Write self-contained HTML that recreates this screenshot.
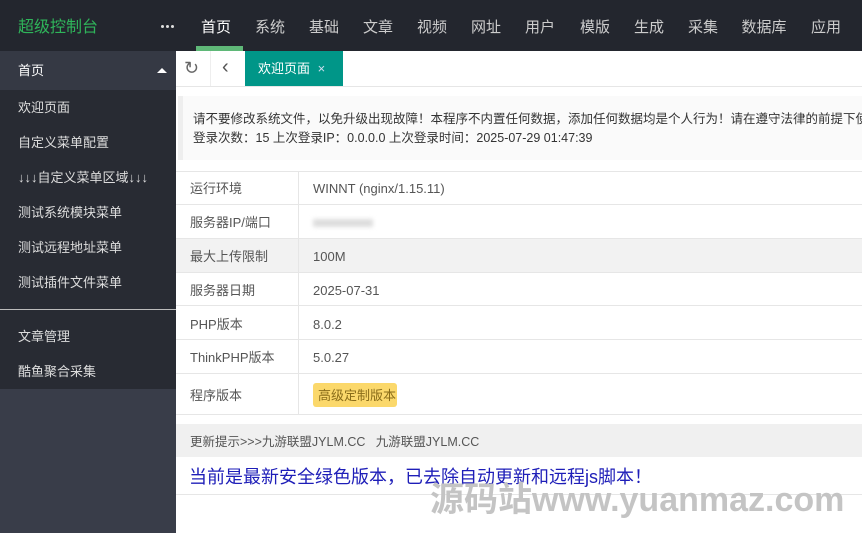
<!DOCTYPE html><html><head><meta charset="utf-8"><style>
*{margin:0;padding:0;box-sizing:border-box}
body{width:862px;height:533px;overflow:hidden;background:#fff;font-family:"Liberation Sans","Noto Sans CJK SC",sans-serif;position:relative;font-size:13px;color:#333;line-height:1.15}
.a{position:absolute;white-space:nowrap}
.hdr{left:0;top:0;width:862px;height:51px;background:#23262e}
.nav{top:19px;color:#ccc;font-size:15px;transform:translateX(-50%)}
.side{left:0;top:51px;width:176px;height:482px;background:#393d49}
.sub{color:#ddd;font-size:13px;left:18px}
.row{left:176px;width:686px;border-bottom:1px solid #e6e6e6}
.c1{left:190px;color:#555}
.c2{left:313px;color:#555}
</style></head><body>
<div class="a hdr"></div>
<div class="a" style="left:18px;top:19px;color:#2fb45a;font-size:16px">超级控制台</div>
<div class="a" style="left:161px;top:25px;width:3px;height:3px;background:#ddd;border-radius:50%"></div>
<div class="a" style="left:166px;top:25px;width:3px;height:3px;background:#ddd;border-radius:50%"></div>
<div class="a" style="left:171px;top:25px;width:3px;height:3px;background:#ddd;border-radius:50%"></div>
<div class="a nav" style="left:216px;color:#fff">首页</div>
<div class="a" style="left:196px;top:46px;width:47px;height:5px;background:#5fb878"></div>
<div class="a nav" style="left:270px">系统</div><div class="a nav" style="left:324px">基础</div><div class="a nav" style="left:378px">文章</div><div class="a nav" style="left:432px">视频</div><div class="a nav" style="left:486px">网址</div><div class="a nav" style="left:540px">用户</div><div class="a nav" style="left:595px">模版</div><div class="a nav" style="left:649px">生成</div><div class="a nav" style="left:703px">采集</div><div class="a nav" style="left:764px">数据库</div><div class="a nav" style="left:826px">应用</div>
<div class="a side"></div>
<div class="a" style="left:0;top:51px;width:176px;height:39px;background:#353944"></div>
<div class="a sub" style="top:64px;color:#fff">首页</div>
<div class="a" style="left:157px;top:68px;width:0;height:0;border:5px solid transparent;border-bottom:5px solid #fff;border-top:0"></div>
<div class="a" style="left:0;top:90px;width:176px;height:299px;background:#282b33"></div>
<div class="a sub" style="top:101px">欢迎页面</div>
<div class="a sub" style="top:136px">自定义菜单配置</div>
<div class="a sub" style="top:171px">↓↓↓自定义菜单区域↓↓↓</div>
<div class="a sub" style="top:206px">测试系统模块菜单</div>
<div class="a sub" style="top:241px">测试远程地址菜单</div>
<div class="a sub" style="top:276px">测试插件文件菜单</div>
<div class="a" style="left:0;top:309px;width:176px;height:1px;background:#bbb"></div>
<div class="a sub" style="top:330px">文章管理</div>
<div class="a sub" style="top:365px">酷鱼聚合采集</div>
<!-- tabs -->
<div class="a" style="left:176px;top:51px;width:686px;height:36px;border-bottom:1px solid #e6e6e6"></div>
<div class="a" style="left:210px;top:51px;width:1px;height:35px;background:#eee"></div>
<div class="a" style="left:184px;top:58px;color:#666;font-size:18px">↻</div>
<div class="a" style="left:222px;top:56px;color:#555;font-size:20px">‹</div>
<div class="a" style="left:245px;top:51px;width:98px;height:35px;background:#009688"></div>
<div class="a" style="left:258px;top:62px;color:#fff;font-size:13px">欢迎页面 <span style="color:#cde;margin-left:4px">×</span></div>
<!-- notice -->
<div class="a" style="left:178px;top:96px;width:684px;height:64px;background:#fafafa;border-left:5px solid #eee"></div>
<div class="a" style="left:193px;top:112px;color:#333;font-size:12.5px">请不要修改系统文件，以免升级出现故障！本程序不内置任何数据，添加任何数据均是个人行为！请在遵守法律的前提下使用</div>
<div class="a" style="left:193px;top:131px;color:#333;font-size:12.5px">登录次数：15 上次登录IP：0.0.0.0 上次登录时间：2025-07-29 01:47:39</div>
<!-- table -->
<div class="a row" style="top:171px;height:34px;border-top:1px solid #e6e6e6"></div>
<div class="a row" style="top:205px;height:34px"></div>
<div class="a row" style="top:239px;height:34px;background:#f2f2f2"></div>
<div class="a row" style="top:273px;height:33px"></div>
<div class="a row" style="top:306px;height:34px"></div>
<div class="a row" style="top:340px;height:34px"></div>
<div class="a row" style="top:374px;height:41px"></div>
<div class="a" style="left:298px;top:171px;width:1px;height:244px;background:#e6e6e6"></div>
<div class="a c1" style="top:182px">运行环境</div><div class="a c2" style="top:182px">WINNT (nginx/1.15.11)</div>
<div class="a c1" style="top:216px">服务器IP/端口</div><div class="a" style="left:313px;top:219px;width:60px;height:8px;background:#ddd;filter:blur(2px)"></div>
<div class="a c1" style="top:250px">最大上传限制</div><div class="a c2" style="top:250px">100M</div>
<div class="a c1" style="top:284px">服务器日期</div><div class="a c2" style="top:284px">2025-07-31</div>
<div class="a c1" style="top:318px">PHP版本</div><div class="a c2" style="top:318px">8.0.2</div>
<div class="a c1" style="top:351px">ThinkPHP版本</div><div class="a c2" style="top:351px">5.0.27</div>
<div class="a c1" style="top:389px">程序版本</div>
<div class="a" style="left:313px;top:383px;width:84px;height:24px;background:#fbd86b;border-radius:3px;color:#8a6d1a;font-size:13px;padding:6px 5px 0">高级定制版本</div>
<div class="a" style="left:176px;top:424px;width:686px;height:33px;background:#f0f0f0"></div>
<div class="a" style="left:190px;top:435px;color:#555;font-size:12.5px">更新提示&gt;&gt;&gt;九游联盟JYLM.CC&nbsp;&nbsp;&nbsp;九游联盟JYLM.CC</div>
<div class="a" style="left:176px;top:494px;width:686px;height:1px;background:#e6e6e6"></div>
<div class="a" style="left:189px;top:467px;color:#1e1eb8;font-size:18px">当前是最新安全绿色版本，已去除自动更新和远程js脚本！</div>
<div class="a" style="left:430px;top:481px;color:#c4c4c4;font-size:34px;font-weight:bold;letter-spacing:0">源码站www.yuanmaz.com</div>
</body></html>
